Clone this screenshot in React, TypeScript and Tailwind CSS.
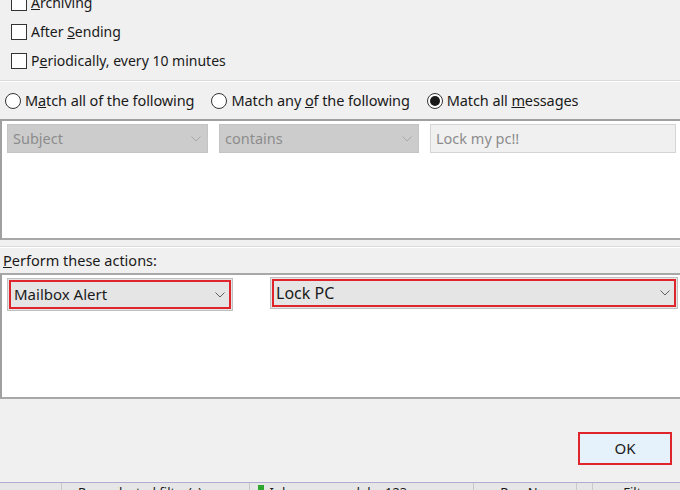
import React from "react";

const font = { fontFamily: '"Noto Sans", "Segoe UI", sans-serif' };

function Chevron({ color = "#606060" }: { color?: string }) {
  return (
    <svg width="10" height="6" viewBox="0 0 10 6" fill="none">
      <path d="M0.5 0.5 L5 5 L9.5 0.5" stroke={color} strokeWidth="1" />
    </svg>
  );
}

function Check({ children }: { children: React.ReactNode }) {
  return (
    <div className="flex h-[29px] items-center">
      <div className="ml-[11px] h-[16px] w-[16px] border border-[#333333] bg-white" />
      <span className="ml-[4px] text-[14px] text-[#1a1a1a]">{children}</span>
    </div>
  );
}

function Radio({ checked, children }: { checked?: boolean; children: React.ReactNode }) {
  return (
    <div className="flex items-center">
      <div className="flex h-[16px] w-[16px] items-center justify-center rounded-full border border-[#333333] bg-white">
        {checked && <div className="h-[10px] w-[10px] rounded-full bg-[#1a1a1a]" />}
      </div>
      <span className="ml-[4px] text-[14.5px] tracking-[-0.1px] text-[#1a1a1a]">{children}</span>
    </div>
  );
}

export default function App() {
  return (
    <div className="relative h-[490px] w-[680px] overflow-hidden bg-[#f0f0f0]" style={font}>
      <div className="mt-[-12px] flex flex-col">
        <Check>
          <u>A</u>rchiving
        </Check>
        <Check>
          After <u>S</u>ending
        </Check>
        <Check>
          P<u>e</u>riodically, every 10 minutes
        </Check>
      </div>
      <div className="mt-[5px] h-[2px] border-t border-[#dcdcdc] border-b-white border-b" />
      <div className="flex h-[37px] items-center pl-[5px]">
        <Radio>
          M<u>a</u>tch all of the following
        </Radio>
        <div className="w-[17px]" />
        <Radio>
          Match any <u>o</u>f the following
        </Radio>
        <div className="w-[17px]" />
        <Radio checked>
          Match all <u>m</u>essages
        </Radio>
      </div>
      <div className="h-[121px] border-t-2 border-l-2 border-b-2 border-t-[#a0a0a0] border-l-[#a0a0a0] border-b-[#a8a8a8] bg-white">
        <div className="mt-[3px] flex items-center pl-[5px]">
          <div className="flex h-[29px] w-[201px] items-center justify-between border border-[#c4c4c4] bg-[#cccccc] pl-[5px] pr-[6px] text-[14.5px] text-[#8c8c8c]">
            <span>Subject</span>
            <Chevron color="#a8a8a8" />
          </div>
          <div className="ml-[11px] flex h-[29px] w-[200px] items-center justify-between border border-[#c4c4c4] bg-[#cccccc] pl-[5px] pr-[6px] text-[14.5px] text-[#8c8c8c]">
            <span>contains</span>
            <Chevron color="#a8a8a8" />
          </div>
          <div className="ml-[11px] flex h-[29px] w-[246px] items-center border border-[#d4d4d4] bg-[#f0f0f0] pl-[5px] text-[14.5px] text-[#8c8c8c]">
            Lock my pc!!
          </div>
        </div>
      </div>
      <div className="mt-[6px] h-[2px] border-t border-[#dcdcdc] border-b border-b-white" />
      <div className="flex h-[25px] items-center pl-[3px] text-[14.5px] text-[#1a1a1a]">
        <span>
          <u>P</u>erform these actions:
        </span>
      </div>
      <div className="h-[126px] border-t-2 border-l-2 border-b-2 border-t-[#a8a8a8] border-l-[#a0a0a0] border-b-[#a8a8a8] bg-white">
        <div className="mt-[2px] flex items-start">
          <div className="ml-[5px] mt-[1px] flex h-[33px] w-[226px] items-center border border-[#c0c0c0] bg-[#e5e5e5] p-[1px]">
            <div className="flex h-full w-full items-center justify-between border-2 border-[#e0242c] pl-[3px] pr-[4px] text-[15px] text-[#1a1a1a]">
              <span>Mailbox Alert</span>
              <Chevron />
            </div>
          </div>
          <div className="ml-[37px] flex h-[32px] w-[408px] items-center border border-[#c0c0c0] bg-[#e5e5e5] p-[1px]">
            <div className="flex h-full w-full items-center justify-between border-2 border-[#e0242c] pl-[2px] pr-[4px] text-[16px] text-[#1a1a1a]">
              <span>Lock PC</span>
              <Chevron />
            </div>
          </div>
        </div>
      </div>
      <div className="flex h-[83px] items-start justify-end pr-[8px] pt-[33px]">
        <div className="flex h-[33px] w-[94px] items-center justify-center border-2 border-[#e0242c] bg-[#e5f1fb] text-[15px] text-[#1a1a1a]">
          OK
        </div>
      </div>
      <div className="flex h-[9px] border-t border-[#b2abd2] bg-[#e6e6e6] overflow-hidden">
        <div className="w-[62px] border-r border-[#c8c8c8]" />
        <div className="w-[188px] border-r border-[#c8c8c8] pl-[16px] text-[13px] leading-[14px] text-[#1a1a1a] pt-[2px]">
          Run selected filter(s)
        </div>
        <div className="flex w-[225px] border-r border-[#c8c8c8] pl-[8px] text-[13px] leading-[14px] text-[#1a1a1a] pt-[2px]">
          <div className="mr-[6px] mt-[0px] h-[8px] w-[6px] bg-[#2fa82f]" />
          Inbox on wyndake 123 yahoo.com
        </div>
        <div className="w-[103px] border-r border-[#c8c8c8] pl-[26px] text-[13px] leading-[14px] text-[#1a1a1a] pt-[2px]">
          Run Now
        </div>
        <div className="w-[16px] border-r border-[#c8c8c8]" />
        <div className="pl-[30px] text-[13px] leading-[14px] text-[#1a1a1a] pt-[2px]">Filter Log</div>
      </div>
    </div>
  );
}
